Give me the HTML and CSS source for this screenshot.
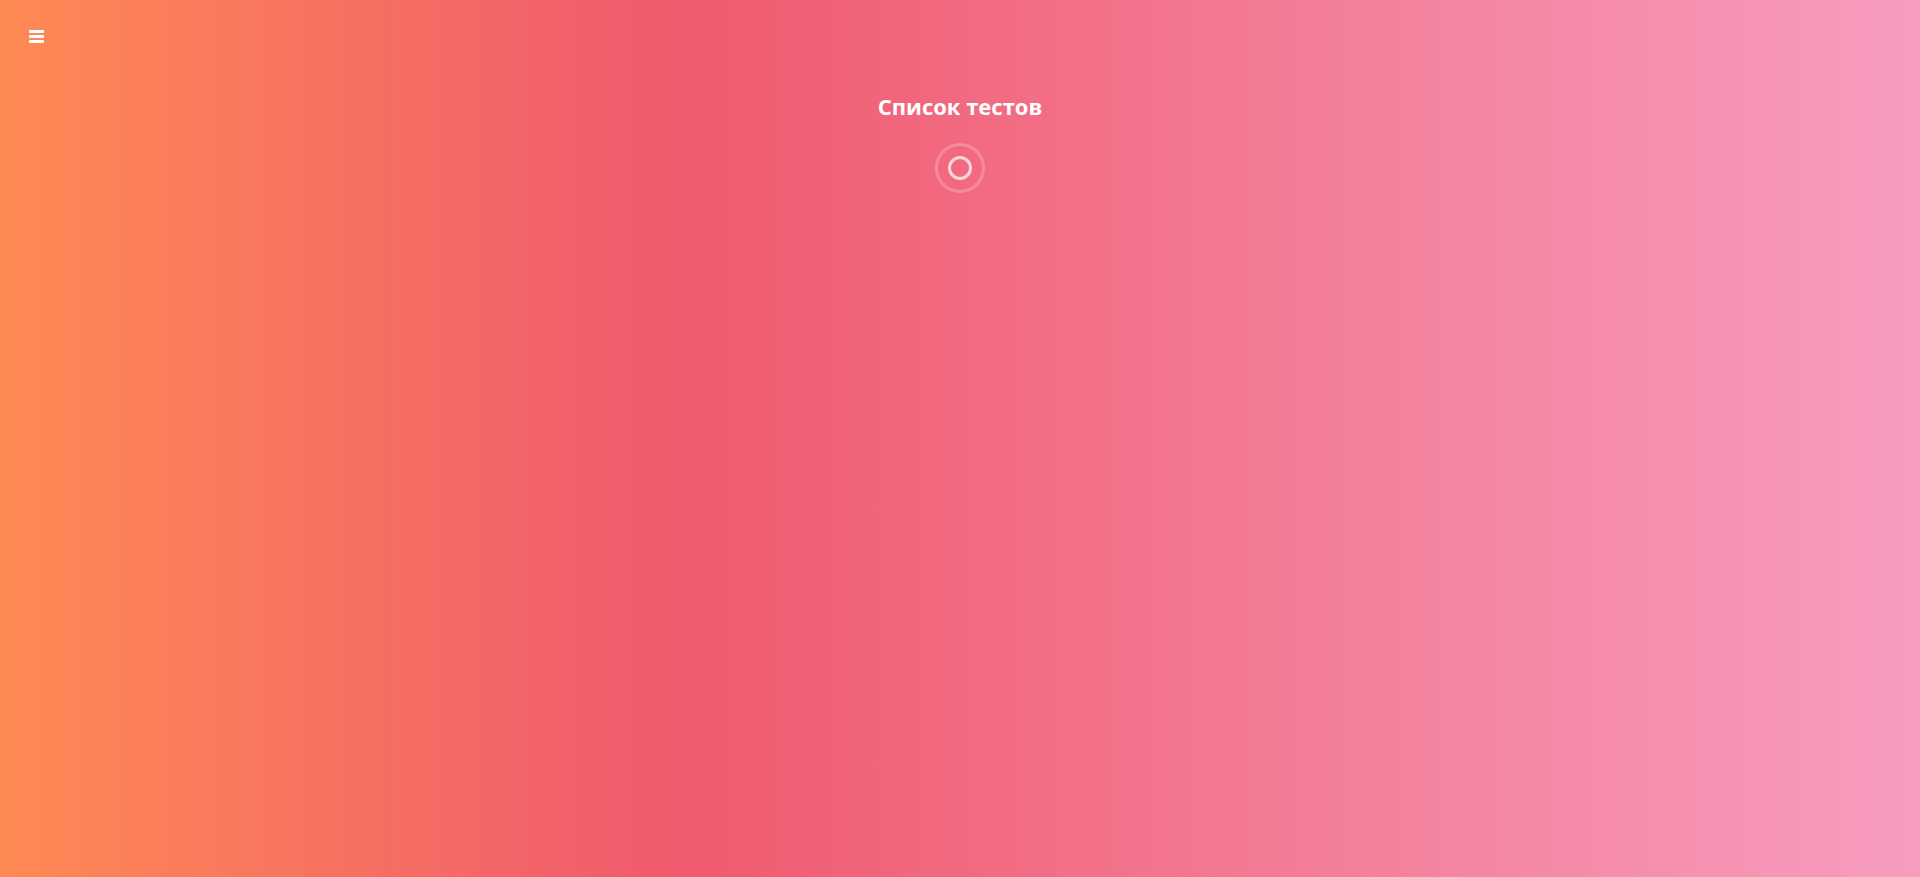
FILE: index.html
```html
<!DOCTYPE html>
<html lang="ru">
<head>
<meta charset="utf-8">
<title>Список тестов</title>
<link rel="stylesheet" href="styles.css">
</head>
<body>
<div class="page">
  <header class="topbar">
    <button class="menu-btn" aria-label="menu">
      <span class="bar"></span><span class="bar"></span><span class="bar"></span>
    </button>
  </header>
  <main class="content">
    <h1 class="title">Список тестов</h1>
    <div class="loader"><div class="loader-inner"></div></div>
  </main>
</div>
</body>
</html>
```
FILE: styles.css
```css
html, body {
  margin: 0;
  padding: 0;
  height: 100%;
}
body {
  font-family: "Open Sans", "Noto Sans", sans-serif;
  background: linear-gradient(to right, #fe8a54 0%, #f2606a 30%, #f05a6f 36%, #f37a93 65%, #f79dc0 100%);
  min-height: 877px;
  color: #fff;
}
.page {
  min-height: 877px;
}
.topbar {
  display: flex;
  padding: 29px 0 0 29px;
  height: 16px;
}
.menu-btn {
  display: flex;
  flex-direction: column;
  gap: 2.5px;
  background: none;
  border: 0;
  padding: 1px 0 0 0;
  width: 15px;
  cursor: pointer;
}
.bar {
  display: block;
  width: 15px;
  height: 2.5px;
  background: #fff;
  border-radius: 1px;
}
.content {
  display: flex;
  flex-direction: column;
  align-items: center;
  padding-top: 46px;
}
.title {
  margin: 0;
  font-size: 22px;
  font-weight: 700;
  line-height: 30px;
  letter-spacing: 0;
}
.loader {
  margin-top: 22px;
  width: 44px;
  height: 44px;
  border: 3px solid rgba(255, 255, 255, 0.22);
  border-radius: 50%;
  display: flex;
  align-items: center;
  justify-content: center;
}
.loader-inner {
  width: 18px;
  height: 18px;
  border: 3px solid rgba(255, 255, 255, 0.72);
  border-radius: 50%;
}
```
